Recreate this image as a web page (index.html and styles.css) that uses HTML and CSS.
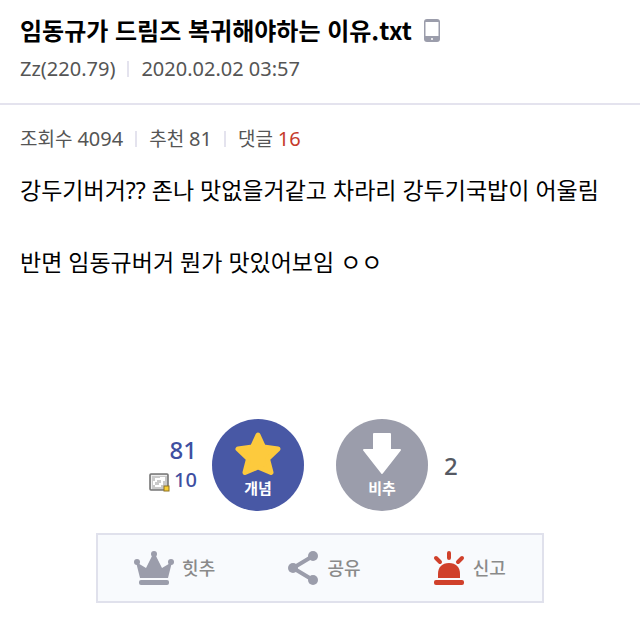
FILE: index.html
```html
<!DOCTYPE html>
<html lang="ko">
<head>
<meta charset="utf-8">
<meta name="viewport" content="width=device-width, initial-scale=1">
<title>임동규가 드림즈 복귀해야하는 이유.txt</title>
<link rel="stylesheet" href="styles.css">
</head>
<body>
<article>
  <header class="post-header">
    <h1 class="title">임동규가 드림즈 복귀해야하는 이유.txt
      <svg class="phone" width="16" height="23" viewBox="0 0 16 23" aria-hidden="true"><rect width="16" height="23" rx="3" fill="#9b9dab"/><rect x="1.5" y="3" width="13" height="14" fill="#fff"/><rect x="7" y="19" width="2" height="2" rx="1" fill="#fff"/></svg>
    </h1>
    <div class="meta"><span>Zz(220.79)</span><span>2020.02.02 03:57</span></div>
  </header>
  <div class="stats">
    <span>조회수 <span class="num">4094</span></span>
    <span>추천 <span class="num">81</span></span>
    <span>댓글 <span class="num comments">16</span></span>
  </div>
  <div class="content">
    <p>강두기버거?? 존나 맛없을거같고 차라리 강두기국밥이 어울림</p>
    <p>반면 임동규버거 뭔가 맛있어보임 ㅇㅇ</p>
  </div>
  <section class="votes">
    <div class="up-counts">
      <span class="up-total">81</span>
      <span class="up-member">
        <svg class="badge" width="21" height="20" viewBox="0 0 21 20" aria-hidden="true"><rect x="1" y="1" width="18" height="16" rx="1" fill="#c9c9c9" stroke="#777" stroke-width="1.6"/><path d="M2 2h16v1H3v13H2z" fill="#eee"/><path d="M6 5h4v2H8v2H6v3H4V8h2zM11 4h5v4h-2v4h-2v2H6v-2h4v-2h2V7h-2V5h1z" fill="#fff"/><rect x="15" y="13" width="5" height="5" fill="#f8ce32" stroke="#8c7024"/></svg>
        10
      </span>
    </div>
    <button class="vote up" type="button">
      <svg width="46" height="44" viewBox="0 0 46 44" aria-hidden="true"><path d="M23 3 28.5 15 43 17 32.500 27 36 40.500 23 35 10 40.500 13.500 27 3 17 17.500 15Z" fill="#fdca3d" stroke="#fdca3d" stroke-width="5" stroke-linejoin="round"/></svg>
      <span>개념</span>
    </button>
    <button class="vote down" type="button">
      <svg width="46" height="44" viewBox="0 0 46 44" aria-hidden="true"><path d="M15 2h16v16h10L23 41 5 18h10Z" fill="#fff" stroke="#fff" stroke-width="2" stroke-linejoin="round"/></svg>
      <span>비추</span>
    </button>
    <span class="down-total">2</span>
  </section>
  <div class="actions">
    <button type="button">
      <svg width="40" height="36" viewBox="0 0 40 36" fill="#9b9dab" aria-hidden="true"><circle cx="20" cy="4" r="3"/><circle cx="3" cy="12" r="3"/><circle cx="37" cy="12" r="3"/><path d="M2 12 12 18 19 4h2l7 14 10-6-4 16H6Z"/><rect x="5" y="30" width="30" height="5" rx="2"/></svg>
      힛추
    </button>
    <button type="button">
      <svg width="32" height="36" viewBox="0 0 32 36" fill="#9b9dab" aria-hidden="true"><path d="M26 6 6 18 26 30" fill="none" stroke="#9b9dab" stroke-width="4"/><circle cx="26" cy="6" r="5"/><circle cx="6" cy="18" r="5"/><circle cx="26" cy="30" r="5"/></svg>
      공유
    </button>
    <button type="button">
      <svg width="32" height="36" viewBox="0 0 32 36" fill="#d0402b" aria-hidden="true"><path d="M5 28v-4c0-7 4-11 11-11s11 4 11 11v4Z"/><rect x="1" y="30" width="30" height="5" rx="2"/><path d="M16 3v5M3 8l4 4M29 8l-4 4" stroke="#d0402b" stroke-width="4" stroke-linecap="round"/></svg>
      신고
    </button>
  </div>
</article>
</body>
</html>
```
FILE: styles.css
```css
* { box-sizing: border-box; }
body {
  margin: 0;
  background: #fff;
  color: #000;
  font-family: "Noto Sans", "Noto Sans CJK KR", sans-serif;
}
svg { display: block; flex: none; }
button {
  border: 0;
  padding: 0;
  background: none;
  color: inherit;
  font: inherit;
  cursor: pointer;
}
.post-header {
  padding: 13px 20px 20px;
  border-bottom: 2px solid #e4e3ee;
}
.title {
  display: flex;
  align-items: center;
  gap: 12px;
  margin: 0;
  font-size: 24px;
  font-weight: 600;
  font-family: "Noto Sans CJK KR", sans-serif;
  line-height: 34px;
}
.meta, .stats {
  display: flex;
  color: #555;
  line-height: 28px;
}
.meta { margin-top: 8px; font-size: 20px; }
.meta span + span, .stats > span + span {
  display: flex;
  align-items: center;
}
.meta > span + span::before, .stats > span + span::before {
  content: "";
  width: 2px;
  height: 16px;
  margin: 0 12px;
  background: #e4e3ee;
}
.stats {
  padding: 20px 20px 0;
  font-size: 19px;
}
.stats > span { white-space: pre; }
.num { font-size: 20px; }
.comments { color: #c63b2b; }
.content {
  min-height: 266px;
  padding: 19px 20px 0;
  font-size: 23px;
  line-height: 36px;
}
.content p { margin: 0 0 36px; }
.votes {
  display: grid;
  grid-template-columns: 1fr 92px 92px 1fr;
  align-items: center;
  column-gap: 32px;
}
.up-counts {
  display: flex;
  flex-direction: column;
  align-items: flex-end;
  margin-right: -17px;
  color: #3e4fa1;
  font-size: 20px;
  font-weight: 500;
  line-height: 30px;
}
.up-total { font-size: 24px; font-weight: 500; }
.up-member { display: flex; align-items: center; gap: 4px; }
.badge { margin-top: 6px; }
.vote {
  display: flex;
  flex-direction: column;
  align-items: center;
  height: 92px;
  padding-top: 13px;
  border-radius: 50%;
  color: #fff;
  font-size: 15px;
  font-weight: 700;
  line-height: 24px;
}
.up { background: #4858a5; }
.down { background: #9b9dab; }
.down-total {
  margin-left: -16px;
  color: #555963;
  font-size: 24px;
  font-weight: 500;
}
.actions {
  display: flex;
  justify-content: space-around;
  width: 70%;
  margin: 22px auto 0;
  padding: 15px 0;
  border: 2px solid #e0e1ec;
  background: #f8fafd;
  color: #8a8a8a;
}
.actions button {
  display: flex;
  align-items: center;
  gap: 8px;
  font-size: 18px;
  font-weight: 500;
  line-height: 32px;
}
```
